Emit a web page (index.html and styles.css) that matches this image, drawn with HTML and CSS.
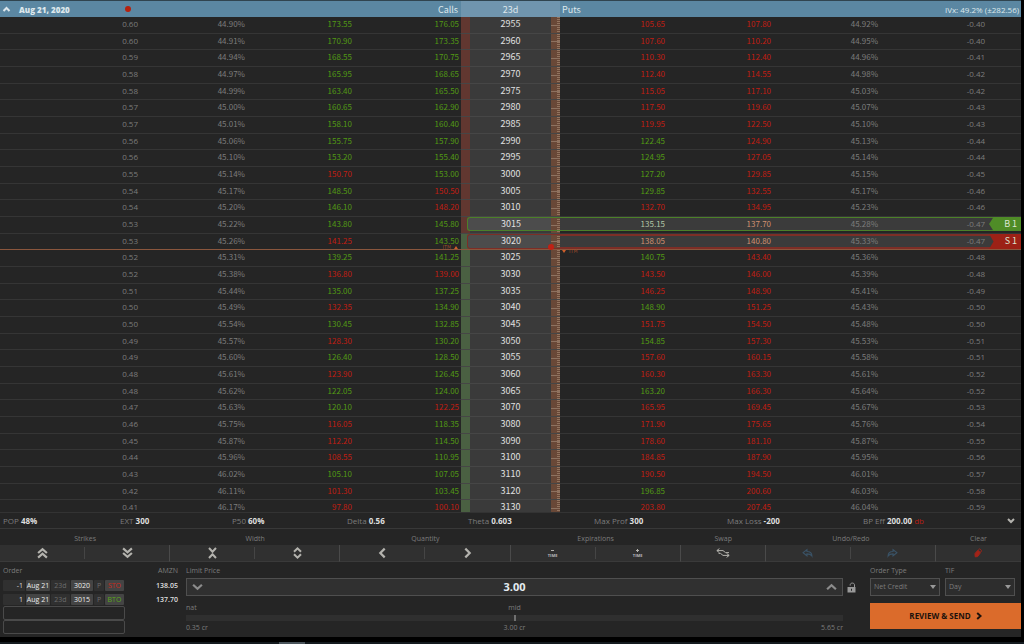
FILE: index.html
```html
<!DOCTYPE html>
<html lang="en">
<head>
<meta charset="utf-8">
<title>AMZN option chain</title>
<link rel="stylesheet" href="styles.css">
</head>
<body>
<div class="app">
  <main class="chain">
    <table class="chain-table">
      <colgroup>
        <col class="col-edge"><col class="col-iv"><col class="col-iv"><col class="col-ask"><col class="col-strike">
        <col class="col-bid"><col class="col-price"><col class="col-iv"><col class="col-iv"><col class="col-tag">
      </colgroup>
      <thead>
        <tr>
          <th>
            <div class="expiry">
              <svg class="icon-collapse" viewBox="0 0 8 6"><path d="M1 5 L4 2 L7 5" /></svg>
              <span class="expiry-date">Aug 21, 2020</span>
              <span class="earnings-dot"></span>
            </div>
          </th>
          <th colspan="3" class="head-calls">Calls</th>
          <th class="head-days">23d</th>
          <th colspan="2" class="head-puts">Puts</th>
          <th colspan="3" class="head-ivx">IVx: 49.2% (±282.56)</th>
        </tr>
      </thead>
      <tbody id="chain-rows"></tbody>
    </table>
  </main>

  <section class="stats">
    <span>POP <b>48%</b></span>
    <span>EXT <b>300</b></span>
    <span>P50 <b>60%</b></span>
    <span>Delta <b>0.56</b></span>
    <span>Theta <b>0.603</b></span>
    <span>Max Prof <b>300</b></span>
    <span>Max Loss <b>-200</b></span>
    <span>BP Eff <b>200.00</b> <i class="debit">db</i></span>
    <button class="stats-toggle" aria-label="Collapse"><svg viewBox="0 0 8 6"><path d="M1 1 L4 4 L7 1" /></svg></button>
  </section>

  <section class="tools">
    <div class="tool wide">
      <span class="tool-label">Strikes</span>
      <div class="tool-buttons">
        <button aria-label="Strikes up"><svg viewBox="0 0 10 10"><path d="M1 5 L5 1.5 L9 5 M1 9.2 L5 5.7 L9 9.2" /></svg></button>
        <button aria-label="Strikes down"><svg viewBox="0 0 10 10"><path d="M1 .8 L5 4.3 L9 .8 M1 5 L5 8.5 L9 5" /></svg></button>
      </div>
    </div>
    <div class="tool wide">
      <span class="tool-label">Width</span>
      <div class="tool-buttons">
        <button aria-label="Narrower"><svg viewBox="0 0 10 12"><path d="M1.5 1 L5 4.8 L8.5 1 M1.5 11 L5 7.2 L8.5 11" /></svg></button>
        <button aria-label="Wider"><svg viewBox="0 0 10 12"><path d="M1.5 4.8 L5 1.4 L8.5 4.8 M1.5 7.2 L5 10.6 L8.5 7.2" /></svg></button>
      </div>
    </div>
    <div class="tool wide">
      <span class="tool-label">Quantity</span>
      <div class="tool-buttons">
        <button aria-label="Less"><svg viewBox="0 0 10 10"><path d="M7 1 L3 5 L7 9" /></svg></button>
        <button aria-label="More"><svg viewBox="0 0 10 10"><path d="M3 1 L7 5 L3 9" /></svg></button>
      </div>
    </div>
    <div class="tool wide">
      <span class="tool-label">Expirations</span>
      <div class="tool-buttons">
        <button class="time"><svg class="sign" viewBox="0 0 5 5"><path d="M1 2.5 H4" /></svg>TIME</button>
        <button class="time"><svg class="sign" viewBox="0 0 5 5"><path d="M1 2.5 H4 M2.5 1 V4" /></svg>TIME</button>
      </div>
    </div>
    <div class="tool">
      <span class="tool-label">Swap</span>
      <div class="tool-buttons">
        <button aria-label="Swap"><svg class="icon-swap" viewBox="0 0 14 10"><path d="M3.4 .6 L.8 2.6 L3.4 4.6 M1 2.6 H7 L9.5 4.6 H13 M10.6 5.4 L13.2 7.4 L10.6 9.4 M13 7.4 H7 L4.5 5.4 H2.6" /></svg></button>
      </div>
    </div>
    <div class="tool wide">
      <span class="tool-label">Undo/Redo</span>
      <div class="tool-buttons">
        <button aria-label="Undo"><svg class="icon-history" viewBox="0 0 10 8"><path d="M1 3.7 L4.5 1 V2.7 C7.5 2.7 9 4 9 6.8 C8 5.2 6.5 4.8 4.5 4.8 V6.5 Z" /></svg></button>
        <button aria-label="Redo"><svg class="icon-history" viewBox="0 0 10 8"><path d="M9 3.7 L5.5 1 V2.7 C2.5 2.7 1 4 1 6.8 C2 5.2 3.5 4.8 5.5 4.8 V6.5 Z" /></svg></button>
      </div>
    </div>
    <div class="tool">
      <span class="tool-label">Clear</span>
      <div class="tool-buttons">
        <button aria-label="Clear"><svg class="icon-clear" viewBox="0 0 8 10"><path class="body" d="M1 5.5 L4 2.2 L6.4 4.8 L3.6 8.6 L1.2 8.8 Z" /><path class="tip" d="M4.4 1.8 L5.6 .8 L7.4 2.6 L6.8 4.2" /></svg></button>
      </div>
    </div>
  </section>

  <section class="ticket">
    <div class="order">
      <div class="caption"><span>Order</span><span>AMZN</span></div>
      <div class="leg">
        <div class="leg-fields">
          <span class="qty">-1</span><button>Aug 21</button><span class="dim">23d</span><button>3020</button><span class="dim">P</span><button class="sell">STO</button>
        </div>
        <b>138.05</b>
      </div>
      <div class="leg">
        <div class="leg-fields">
          <span class="qty">1</span><button>Aug 21</button><span class="dim">23d</span><button>3015</button><span class="dim">P</span><button class="buy">BTO</button>
        </div>
        <b>137.70</b>
      </div>
      <div class="leg-empty"></div>
      <div class="leg-empty"></div>
    </div>

    <div class="price">
      <label class="caption" for="limit">Limit Price</label>
      <div class="price-line">
        <div class="price-field">
          <button aria-label="Lower price"><svg viewBox="0 0 10 7"><path d="M1 1.5 L5 5.2 L9 1.5" /></svg></button>
          <input id="limit" type="text" value="3.00">
          <button aria-label="Raise price"><svg viewBox="0 0 10 7"><path d="M1 5.5 L5 1.8 L9 5.5" /></svg></button>
        </div>
        <button class="lock" aria-label="Lock price"><svg viewBox="0 0 9 11"><path class="shackle" d="M7.5 5.5 V2.8 C7.5 .5 3.2 .5 3.2 2.8 V3.6" /><path class="case" d="M.5 5 H8.5 V10.5 H.5 Z" /><path class="hole" d="M4 6.8 H5 V8.8 H4 Z" /></svg></button>
      </div>
      <div class="scale">
        <div class="scale-text"><span>nat</span><span>mid</span><span></span></div>
        <input type="range" min="0" max="100" value="50" aria-label="Price between natural and opposite">
        <div class="scale-text values"><span>0.35 cr</span><span>3.00 cr</span><span>5.65 cr</span></div>
      </div>
    </div>

    <div class="send">
      <div class="selects">
        <div>
          <label class="caption" for="type">Order Type</label>
          <div class="select"><select id="type"><option>Net Credit</option></select></div>
        </div>
        <div>
          <label class="caption" for="tif">TIF</label>
          <div class="select"><select id="tif"><option>Day</option></select></div>
        </div>
      </div>
      <button class="review">REVIEW &amp; SEND <svg viewBox="0 0 6 8"><path d="M1.2 1 L4.6 4 L1.2 7" /></svg></button>
    </div>
  </section>
</div>
<footer class="taskbar"><span></span></footer>
<script src="chain.js"></script>
</body>
</html>
```

FILE: styles.css
```css
* {
  box-sizing: border-box;
}

body {
  margin: 0;
  height: 100vh;
  display: flex;
  flex-direction: column;
  background: #000;
  color: #7c7c7c;
  font: 8px/12px "Open Sans", "Noto Sans", sans-serif;
}

button,
input,
select {
  margin: 0;
  padding: 0;
  border: 0;
  border-radius: 0;
  background: none;
  color: inherit;
  font: inherit;
}

svg {
  display: block;
  fill: none;
  stroke: #b4b3ae;
  stroke-width: 2;
}

b {
  color: #dedede;
}

.app {
  flex: 1;
  min-height: 0;
  display: flex;
  flex-direction: column;
  margin-right: 3px;
  background: #252525;
}

/* Option chain */

.chain {
  flex: 1 1 0;
  min-height: 0;
  overflow: hidden;
}

.chain-table {
  width: 100%;
  table-layout: fixed;
  border-collapse: separate;
  border-spacing: 0;
  font-family: "Noto Sans CJK SC", "Open Sans", sans-serif;
}

.col-edge { width: 138px; }
.col-iv { width: 107px; }
.col-price { width: 106px; }
.col-bid { width: 105px; }
.col-ask { width: 109px; }
.col-strike { width: 99px; }
.col-tag { width: 36px; }

.chain-table th {
  height: 17px;
  padding: 0;
  border-top: 1px solid #30444f;
  background: #5b87a2;
  color: #dde7ec;
  font-size: 9px;
  line-height: 15px;
  font-weight: 400;
  white-space: nowrap;
}

.expiry {
  display: flex;
  align-items: center;
  padding: 0 7px 0 2px;
}

.icon-collapse {
  width: 9px;
  height: 6px;
  margin-right: 8px;
  stroke: #dde7ec;
}

.expiry-date {
  font-family: "Open Sans", sans-serif;
  font-size: 8px;
  font-weight: 800;
}

.earnings-dot {
  width: 6px;
  height: 6px;
  margin-left: auto;
  border-radius: 50%;
  background: #b5220f;
}

.chain-table .head-calls { text-align: right; padding-right: 3px; }
.chain-table .head-days { background: #7095ae; }
.chain-table .head-puts { text-align: left; padding-left: 2px; }

.chain-table .head-ivx {
  padding-right: 2px;
  font-family: "Open Sans", sans-serif;
  font-size: 8px;
  text-align: right;
}

.chain-table td {
  height: 17px;
  padding: 0;
  border-bottom: 1px solid #353535;
  line-height: 14px;
  text-align: right;
  vertical-align: top;
}

.chain-table tr:nth-child(3n + 2) td {
  height: 16px;
}

.chain-table .delta {
  font-family: "Open Sans", sans-serif;
}

.chain-table .ask-call {
  padding-right: 2px;
}

.up { color: #529a14; }
.down { color: #c01d12; }

.chain-table .strike {
  position: relative;
  padding: 0 9px;
  border-bottom-color: #464646;
  background:
    linear-gradient(#8d7260, #8d7260) right center / 9px 1px no-repeat,
    repeating-linear-gradient(#92745f 0 1px, #694837 1px 2px) right top / 3px 100% no-repeat,
    linear-gradient(#694837, #694837) right top / 9px 100% no-repeat,
    linear-gradient(#613730, #613730) left top / 9px 100% no-repeat,
    #3a3a3a;
  color: #e0e0e0;
  font-size: 9px;
  text-align: center;
}

.chain-table .otm .strike {
  background:
    linear-gradient(#8d7260, #8d7260) right center / 9px 1px no-repeat,
    repeating-linear-gradient(#92745f 0 1px, #694837 1px 2px) right top / 3px 100% no-repeat,
    linear-gradient(#694837, #694837) right top / 9px 100% no-repeat,
    linear-gradient(#4a6042, #4a6042) left top / 9px 100% no-repeat,
    #3a3a3a;
}

/* Rows that carry an open leg */

.leg-row {
  --leg: #4c8029;
  --edge: 1px;
  --fill: 13px;
  --box: 14px;
}

.leg-row.short {
  --leg: #7d2e26;
  --edge: 2px;
  --box: 15px;
}

.leg-row .strike-value {
  display: block;
  height: var(--box);
  margin: 0 -9px 0 -3px;
  padding-right: 6px;
  border: 1px solid var(--leg);
  border-right: 0;
  border-radius: 3px 0 0 3px;
  line-height: 12px;
  background: linear-gradient(90deg, #4c4c4c 83px, transparent 83px);
}

.chain-table .leg-row .put {
  background: linear-gradient(
    var(--leg) 0 var(--edge),
    #3b3b3b var(--edge) var(--fill),
    var(--leg) var(--fill) var(--box),
    transparent var(--box)
  );
}

.leg-row .put.up { color: #b3c6a6; }
.leg-row .put.down { color: #cf9070; }

.leg-tag {
  display: block;
  width: 32px;
  height: var(--box);
  margin-left: auto;
  padding-right: 4px;
  background: #4f8c27;
  color: #dce6d2;
  clip-path: polygon(0 50%, 14% 0, 100% 0, 100% 100%, 14% 100%);
  font-size: 9px;
  line-height: 14px;
  text-align: right;
}

.short .leg-tag {
  background: #9c2116;
  clip-path: polygon(0 0, 100% 0, 100% 100%, 0 100%, 14% 50%);
}

.chain-table .at-money td {
  border-bottom-color: #8a563d;
}

.money-mark {
  position: absolute;
  top: 10px;
  display: flex;
  align-items: center;
  gap: 3px;
  color: #a44c2a;
  font-size: 5px;
  line-height: 6px;
}

.money-mark.calls { right: 100%; margin-right: 3px; }
.money-mark.puts { left: 100%; top: 14px; margin-left: 2px; z-index: 1; }

.money-mark i {
  border: 2px solid transparent;
}

.money-mark.calls i { border-bottom: 3px solid #cf5f2b; border-top: 0; }
.money-mark.puts i { border-top: 3px solid #cf5f2b; border-bottom: 0; }

.price-dot {
  position: absolute;
  right: 6px;
  bottom: -1px;
  width: 6px;
  height: 6px;
  border-radius: 50%;
  background: #c02114;
}

/* Position statistics */

.stats {
  display: grid;
  grid-template-columns: 117fr 112fr 115fr 121fr 126fr 133fr 136fr 144fr 14fr;
  align-items: center;
  height: 17px;
  padding-left: 3px;
  border-top: 1px solid #333;
  border-bottom: 1px solid #383838;
  line-height: 15px;
  white-space: nowrap;
}

.debit {
  color: #b31e13;
  font-style: normal;
}

.stats-toggle svg {
  width: 8px;
  height: 6px;
}

/* Tool strip */

.tools {
  display: flex;
}

.tool {
  flex: 1 1 0;
  text-align: center;
}

.tool.wide {
  flex-grow: 2;
}

.tool-label {
  display: block;
  height: 16px;
  padding-top: 4px;
  font-size: 7px;
}

.tool-buttons {
  display: flex;
  height: 17px;
  border-bottom: 1px solid #3a3a3a;
  border-right: 1px solid #4a4a4a;
  background: #303030;
}

.tool:last-child .tool-buttons {
  border-right: 0;
}

.tool-buttons button {
  flex: 1;
  display: flex;
  align-items: center;
  justify-content: center;
}

.tool-buttons button + button {
  border-left: 1px solid #454545;
  margin: 2px 0;
}

.tool-buttons svg {
  width: 11px;
  height: 12px;
}

.tool-buttons .time {
  flex-direction: column;
  color: #b8b8b8;
  font-size: 4px;
  font-weight: 700;
  line-height: 6px;
}

.tool-buttons .sign {
  width: 5px;
  height: 5px;
  stroke-width: 1;
}

.tool-buttons .icon-swap {
  width: 14px;
  height: 10px;
  stroke-width: 1;
}

.tool-buttons .icon-history {
  stroke: #3a5367;
  stroke-width: 1;
}

.tool-buttons .icon-clear {
  width: 8px;
  stroke: #a32318;
  stroke-width: 1;
}

.icon-clear .body {
  fill: #a32318;
}

/* Order ticket */

.ticket {
  display: flex;
  height: 75px;
  padding-left: 3px;
}

.caption {
  display: block;
  height: 16px;
  padding-top: 3px;
  font-size: 7px;
}

.order {
  width: 175px;
  margin-right: 8px;
}

.order .caption {
  display: flex;
  justify-content: space-between;
}

.leg {
  display: flex;
  justify-content: space-between;
  height: 14px;
  padding-top: 2px;
  font-size: 7px;
  line-height: 11px;
}

.leg b {
  font-weight: 600;
}

.leg-fields {
  display: grid;
  grid-template-columns: 22px 24px 19px 22px 10px 19px;
  column-gap: 1px;
  height: 11px;
  text-align: center;
  line-height: 11px;
}

.leg-fields > * {
  background: #303030;
  border-radius: 1px;
}

.leg-fields button {
  background: #444;
  color: #ececec;
  white-space: nowrap;
}

.leg-fields .qty {
  padding-right: 2px;
  color: #dcdcdc;
  text-align: right;
}

.leg-fields .dim {
  color: #6c6c6c;
}

.leg-fields .sell { color: #cc2a1c; }
.leg-fields .buy { color: #5ba81c; }

.leg-empty {
  width: 122px;
  height: 14px;
  border: 1px solid #4a4a4a;
  border-radius: 2px;
}

.price {
  flex: 1;
  margin-right: 14px;
}

.price-line {
  display: flex;
  align-items: center;
}

.price-field {
  flex: 1;
  display: flex;
  align-items: center;
  justify-content: space-between;
  height: 18px;
  padding: 0 5px;
  border: 1px solid #4f4f4f;
  background: #303030;
}

.price-field svg {
  width: 11px;
  height: 8px;
  stroke: #8c8c8c;
}

.price-field input {
  flex: 1;
  min-width: 0;
  color: #e4ecf0;
  font-size: 11px;
  font-weight: 700;
  text-align: center;
}

.lock {
  margin-left: 4px;
}

.lock svg {
  width: 9px;
  height: 11px;
  stroke: none;
}

.lock .shackle { stroke: #999; stroke-width: 1; }
.lock .case { fill: #999; }
.lock .hole { fill: #242424; }

.scale {
  margin-right: 13px;
  padding-top: 6px;
}

.scale-text {
  display: grid;
  grid-template-columns: 1fr 1fr 1fr;
  height: 13px;
  font-size: 7px;
  line-height: 12px;
  text-align: center;
}

.scale-text.values { padding-top: 1px; }
.scale-text span:first-child { text-align: left; }
.scale-text span:last-child { text-align: right; }

.scale input {
  display: block;
  width: 100%;
  height: 6px;
  appearance: none;
  background: #2f2f2f;
}

.scale input::-webkit-slider-thumb {
  appearance: none;
  width: 2px;
  height: 6px;
  background: #707070;
}

.send {
  width: 151px;
}

.selects {
  display: grid;
  grid-template-columns: 70px 70px;
  column-gap: 5px;
}

.select {
  display: flex;
  align-items: center;
  height: 18px;
  padding: 0 3px;
  border: 1px solid #4f4f4f;
  background: #2d2d2d;
}

.select select {
  flex: 1;
  min-width: 0;
  appearance: none;
  font-size: 7px;
}

.select::after {
  content: "";
  border: 3px solid transparent;
  border-top: 4px solid #999;
  border-bottom: 0;
}

.review {
  display: flex;
  align-items: center;
  justify-content: center;
  gap: 5px;
  width: 100%;
  height: 26px;
  margin-top: 7px;
  background: #db6b2b;
  color: #1d120c;
  font-size: 8px;
  font-weight: 700;
}

.review svg {
  width: 6px;
  height: 8px;
  stroke: #1d120c;
}

.taskbar {
  display: flex;
  height: 7px;
  padding-left: 279px;
  border-top: 5px solid #000;
  background: #141b1f;
}

.taskbar span {
  width: 26px;
  background: #4a545b;
}
```

FILE: chain.js
```js
// call delta, call IV, call bid, call ask, strike, put bid, put ask, put IV, put delta
// A trailing "r" marks a price that ticked down.
const chain = `
0.60 44.90 173.55 176.05 2955 105.65r 107.80r 44.92 -0.40
0.60 44.91 170.90 173.35 2960 107.60r 110.20r 44.95 -0.40
0.59 44.94 168.55 170.75 2965 110.30r 112.40r 44.96 -0.41
0.58 44.97 165.95 168.65 2970 112.40r 114.55r 44.98 -0.42
0.58 44.99 163.40 165.50 2975 115.05r 117.10r 45.03 -0.42
0.57 45.00 160.65 162.90 2980 117.50r 119.60r 45.07 -0.43
0.57 45.01 158.10 160.40 2985 119.95r 122.50r 45.10 -0.43
0.56 45.06 155.75 157.90 2990 122.45 124.90r 45.13 -0.44
0.56 45.10 153.20 155.40 2995 124.95 127.05r 45.14 -0.44
0.55 45.14 150.70r 153.00 3000 127.20 129.85r 45.15 -0.45
0.54 45.17 148.50 150.50r 3005 129.85 132.55r 45.17 -0.46
0.54 45.20 146.10 148.20r 3010 132.70r 134.95r 45.23 -0.46
0.53 45.22 143.80 145.80 3015 135.15 137.70r 45.28 -0.47
0.53 45.26 141.25r 143.50 3020 138.05r 140.80r 45.33 -0.47
0.52 45.31 139.25 141.25 3025 140.75 143.40r 45.36 -0.48
0.52 45.38 136.80r 139.00r 3030 143.50r 146.00r 45.39 -0.48
0.51 45.44 135.00 137.25 3035 146.25r 148.90r 45.41 -0.49
0.50 45.49 132.35r 134.90 3040 148.90 151.25r 45.43 -0.50
0.50 45.54 130.45 132.85 3045 151.75r 154.50r 45.48 -0.50
0.49 45.57 128.30r 130.20 3050 154.85 157.30r 45.53 -0.51
0.49 45.60 126.40 128.50 3055 157.60r 160.15r 45.58 -0.51
0.48 45.61 123.90r 126.45 3060 160.30r 163.30r 45.61 -0.52
0.48 45.62 122.05 124.00 3065 163.20 166.30r 45.64 -0.52
0.47 45.63 120.10 122.25r 3070 165.95r 169.45r 45.67 -0.53
0.46 45.75 116.05r 118.35 3080 171.90r 175.65r 45.76 -0.54
0.45 45.87 112.20r 114.50 3090 178.60r 181.10r 45.87 -0.55
0.44 45.96 108.55r 110.95 3100 184.85r 187.90r 45.95 -0.56
0.43 46.02 105.10 107.05 3110 190.50r 194.50r 46.01 -0.57
0.42 46.11 101.30r 103.45 3120 196.85 200.60r 46.03 -0.58
0.41 46.17 97.80r 100.10r 3130 203.80r 207.45r 46.04 -0.59
`.trim().split("\n").map((line) => line.split(" "));

const legs = {
  3015: { side: "long", tag: "B 1" },
  3020: { side: "short", tag: "S 1" },
};

const firstOtmCall = 3020;

function priceCell(text, extra) {
  const tick = text.endsWith("r") ? "down" : "up";
  return `<td class="${tick} ${extra}">${text.replace("r", "")}</td>`;
}

document.getElementById("chain-rows").innerHTML = chain.map((row) => {
  const [callDelta, callIv, callBid, callAsk, strike, putBid, putAsk, putIv, putDelta] = row;
  const leg = legs[strike];
  const names = [];
  if (leg) names.push("leg-row", leg.side);
  if (Number(strike) >= firstOtmCall) names.push("otm");
  if (Number(strike) === firstOtmCall) names.push("at-money");

  const marks = Number(strike) === firstOtmCall
    ? `<span class="money-mark calls">ITM<i></i></span><span class="price-dot"></span><span class="money-mark puts"><i></i>ITM</span>`
    : "";

  return `<tr class="${names.join(" ")}">
    <td class="delta">${callDelta}</td>
    <td>${callIv}%</td>
    ${priceCell(callBid, "bid-call")}
    ${priceCell(callAsk, "ask-call")}
    <td class="strike"><span class="strike-value">${strike}</span>${marks}</td>
    ${priceCell(putBid, "put")}
    ${priceCell(putAsk, "put")}
    <td class="put">${putIv}%</td>
    <td class="put delta">${putDelta}</td>
    <td class="put">${leg ? `<span class="leg-tag">${leg.tag}</span>` : ""}</td>
  </tr>`;
}).join("");
```
